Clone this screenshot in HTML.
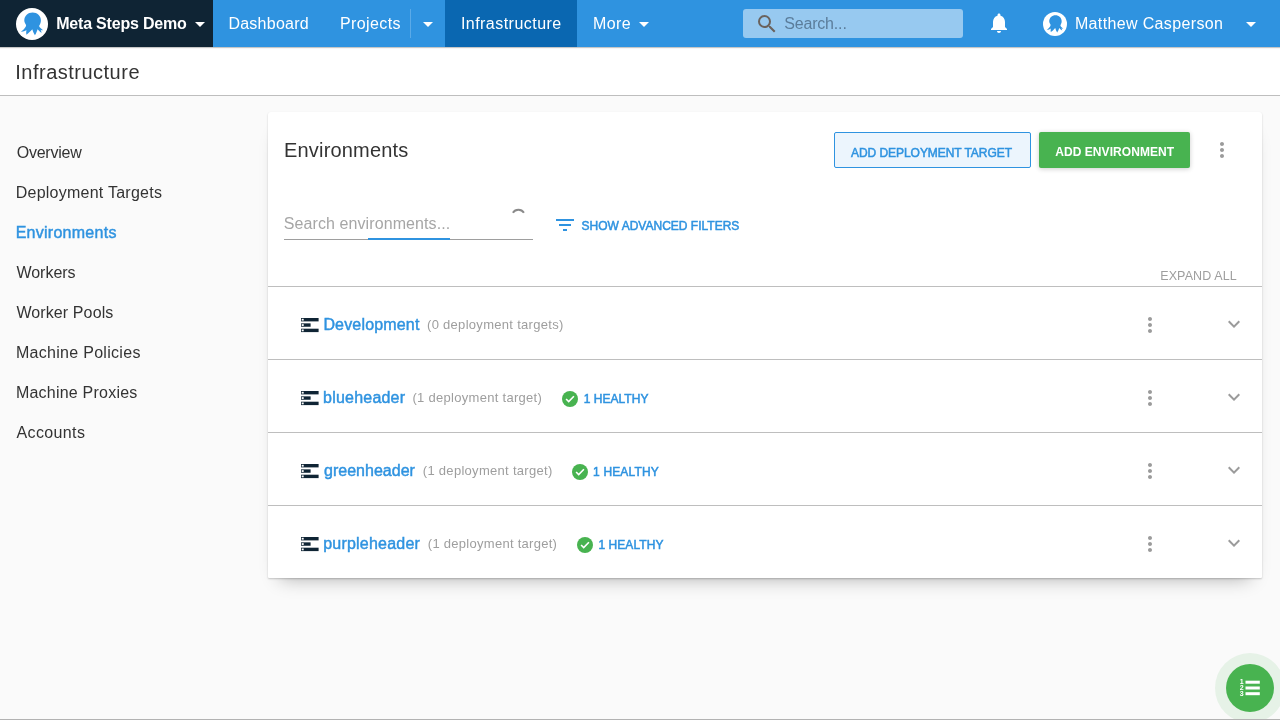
<!DOCTYPE html>
<html lang="en">
<head>
<meta charset="utf-8">
<title>Infrastructure - Environments</title>
<style>
*{box-sizing:border-box;margin:0;padding:0}
html,body{width:1280px;height:720px;overflow:hidden;background:#fafafa;font-family:"Liberation Sans",sans-serif;color:#333}
.abs,.t{position:absolute}
.t{white-space:nowrap;line-height:1}
#nav{position:absolute;left:0;top:0;width:1280px;height:47px;background:#2f93e0;box-shadow:0 1px 1px rgba(0,0,0,.22)}
#space{position:absolute;left:0;top:0;width:213px;height:47px;background:#0f2434}
#active{position:absolute;left:445px;top:0;width:132px;height:47px;background:#0a67b1}
.nt{color:#fff;font-size:16px}
#hdr{position:absolute;left:0;top:47px;width:1280px;height:49px;background:#fff;border-bottom:1px solid #bebebe}
#card{position:absolute;left:268px;top:112px;width:994px;height:466px;background:#fff;border-radius:3px 3px 1px 1px;box-shadow:0 1px 2px rgba(0,0,0,.2),0 12px 18px -12px rgba(0,0,0,.32)}
.hr{position:absolute;left:268px;width:994px;height:1px;background:#bebebe}
.side{font-size:16px;color:#333}
.name{font-size:16px;-webkit-text-stroke-width:.45px;color:#2f93e0}
.cnt{font-size:13px;color:#9e9e9e}
.hl{font-size:12px;-webkit-text-stroke-width:.5px;color:#2f93e0}
svg{position:absolute;overflow:visible}
body{will-change:transform}
/*FIT*/
#t_space{left:56.20px;letter-spacing:-0.200px}
#t_dash{left:228.40px;letter-spacing:0.253px}
#t_proj{left:340.00px;letter-spacing:0.386px}
#t_infra{left:460.90px;letter-spacing:0.465px}
#t_more{left:593.00px;letter-spacing:0.382px}
#t_search{left:784.20px;letter-spacing:-0.173px}
#t_user{left:1074.90px;letter-spacing:0.357px}
#t_title{left:15.25px;letter-spacing:0.496px}
#s1{left:16.70px;letter-spacing:-0.232px}
#s2{left:15.70px;letter-spacing:0.248px}
#s3{left:15.70px;letter-spacing:0.262px}
#s4{left:16.40px;letter-spacing:-0.011px}
#s5{left:16.40px;letter-spacing:0.106px}
#s6{left:15.90px;letter-spacing:0.296px}
#s7{left:15.90px;letter-spacing:0.223px}
#s8{left:16.50px;letter-spacing:0.370px}
#t_env{left:284.00px;letter-spacing:0.180px}
#b1{left:851.00px;letter-spacing:-0.052px}
#b2{left:1055.20px;letter-spacing:0.066px}
#t_ph{left:283.75px;letter-spacing:0.092px}
#t_adv{left:581.60px;letter-spacing:0.008px}
#t_exp{left:1160.20px;letter-spacing:0.118px}
#n1{left:323.40px;letter-spacing:0.167px}
#c1{left:427.00px;letter-spacing:0.298px}
#n2{left:323.10px;letter-spacing:0.206px}
#c2{left:412.50px;letter-spacing:0.288px}
#h2{left:583.75px;letter-spacing:0.024px}
#n3{left:324.00px;letter-spacing:0.019px}
#c3{left:422.80px;letter-spacing:0.293px}
#h3{left:593.10px;letter-spacing:0.149px}
#n4{left:323.25px;letter-spacing:0.207px}
#c4{left:427.80px;letter-spacing:0.278px}
#h4{left:598.40px;letter-spacing:0.067px}
/*ENDFIT*/
</style>
</head>
<body>
<div id="hdr"></div>
<div id="nav"></div>
<div id="space"></div>
<div id="active"></div>

<!-- logo -->
<svg style="left:16px;top:8px" width="32" height="32" viewBox="0 0 32 32"><circle cx="16" cy="16" r="16" fill="#fff"/><path fill="#2f93e0" d="M16.6 4.4C21.3 4.4 24.9 7.9 24.9 12.4C24.9 14.6 24.1 16 23.4 17.3C23 18.1 23.3 18.8 24 19.5L27.1 22.3C26 22.5 25.2 22.2 24.6 21.8L25.7 24.7C24.2 24 22.8 22.8 21.6 21.2C21.1 22.8 20.3 25.2 18.9 27.2C17.8 25.6 17 23.5 16.3 21.3C14.6 23 12.6 25.4 10.4 26.8C10.1 25.2 10.1 23.6 10.4 22C8.8 23.1 6.8 23.8 5 23.6C7 22.4 9 20.4 9.800 18.6C10.2 17.8 10.2 17.2 9.8 16.4C9 15 8.3 14 8.3 12.4C8.3 7.9 12 4.4 16.6 4.4Z"/></svg>
<span class="t nt" id="t_space" style="top:16px;font-weight:bold">Meta Steps Demo</span>
<svg style="left:195px;top:22px" width="10" height="5" viewBox="0 0 10 5"><path d="M0 0h10L5 5z" fill="#fff"/></svg>

<span class="t nt" id="t_dash" style="top:16px">Dashboard</span>
<span class="t nt" id="t_proj" style="top:16px">Projects</span>
<div class="abs" style="left:410px;top:9px;width:1px;height:29px;background:#5aaae8"></div>
<svg style="left:423px;top:22px" width="10" height="5" viewBox="0 0 10 5"><path d="M0 0h10L5 5z" fill="#fff"/></svg>
<span class="t nt" id="t_infra" style="top:16px">Infrastructure</span>
<span class="t nt" id="t_more" style="top:16px">More</span>
<svg style="left:639px;top:22px" width="10" height="5" viewBox="0 0 10 5"><path d="M0 0h10L5 5z" fill="#fff"/></svg>

<!-- search -->
<div class="abs" style="left:743px;top:9px;width:220px;height:29px;border-radius:3px;background:#97c9f0"></div>
<svg style="left:755px;top:12px" width="24" height="24" viewBox="0 0 24 24"><path fill="#6a625d" d="M15.500 14h-.790l-.280-.270A6.471 6.471 0 0 0 16 9.500 6.500 6.500 0 1 0 9.500 16c1.610 0 3.090-.590 4.230-1.570l.270.280v.790l5 4.990L20.490 19l-4.990-5zm-6 0C7.010 14 5 11.990 5 9.500S7.010 5 9.500 5 14 7.010 14 9.500 11.990 14 9.500 14z"/></svg>
<span class="t" id="t_search" style="top:16px;font-size:16px;color:#5b7d9b">Search...</span>

<!-- bell -->
<svg style="left:987px;top:11px" width="24" height="24" viewBox="0 0 24 24"><path fill="#fff" d="M12 22c1.100 0 2-.900 2-2h-4c0 1.100.890 2 2 2zm6-6v-5c0-3.070-1.640-5.640-4.500-6.320V4c0-.830-.670-1.500-1.500-1.500s-1.500.670-1.500 1.500v.680C7.630 5.360 6 7.920 6 11v5l-2 2v1h16v-1l-2-2z"/></svg>

<!-- user -->
<svg style="left:1043px;top:12px" width="24" height="24" viewBox="0 0 32 32"><circle cx="16" cy="16" r="16" fill="#fff"/><path fill="#2f93e0" d="M16.6 4.4C21.3 4.4 24.9 7.9 24.9 12.4C24.9 14.6 24.1 16 23.4 17.3C23 18.1 23.3 18.8 24 19.5L27.1 22.3C26 22.5 25.2 22.2 24.6 21.8L25.7 24.7C24.2 24 22.8 22.8 21.6 21.2C21.1 22.8 20.3 25.2 18.9 27.2C17.8 25.6 17 23.5 16.3 21.3C14.6 23 12.6 25.4 10.4 26.8C10.1 25.2 10.1 23.6 10.4 22C8.8 23.1 6.8 23.8 5 23.6C7 22.4 9 20.4 9.800 18.6C10.2 17.8 10.2 17.2 9.8 16.4C9 15 8.3 14 8.3 12.4C8.3 7.9 12 4.4 16.6 4.4Z"/></svg>
<span class="t nt" id="t_user" style="top:16px">Matthew Casperson</span>
<svg style="left:1246px;top:22px" width="10" height="5" viewBox="0 0 10 5"><path d="M0 0h10L5 5z" fill="#fff"/></svg>

<!-- header -->
<span class="t" id="t_title" style="top:62px;font-size:20px;color:#333">Infrastructure</span>

<!-- sidebar -->
<span class="t side" id="s1" style="top:145px">Overview</span>
<span class="t side" id="s2" style="top:185px">Deployment Targets</span>
<span class="t side" id="s3" style="top:225px;color:#2f93e0;-webkit-text-stroke-width:.45px">Environments</span>
<span class="t side" id="s4" style="top:265px">Workers</span>
<span class="t side" id="s5" style="top:305px">Worker Pools</span>
<span class="t side" id="s6" style="top:345px">Machine Policies</span>
<span class="t side" id="s7" style="top:385px">Machine Proxies</span>
<span class="t side" id="s8" style="top:425px">Accounts</span>

<!-- card -->
<div id="card"></div>
<span class="t" id="t_env" style="top:140px;font-size:20px;color:#333">Environments</span>

<div class="abs" style="left:834px;top:132px;width:197px;height:36px;border:1px solid #2f93e0;border-radius:2px;background:#ecf5fd"></div>
<span class="t" id="b1" style="top:147px;font-size:12px;-webkit-text-stroke-width:.5px;color:#2f93e0">ADD DEPLOYMENT TARGET</span>
<div class="abs" style="left:1039px;top:132px;width:151px;height:36px;border-radius:2px;background:#48b350;box-shadow:0 1px 5px rgba(0,0,0,.2)"></div>
<span class="t" id="b2" style="top:146px;font-size:12px;font-weight:bold;color:#fff">ADD ENVIRONMENT</span>
<svg style="left:1210px;top:138px" width="24" height="24" viewBox="0 0 24 24"><path fill="#9b9b9b" d="M12 8c1.100 0 2-.900 2-2s-.900-2-2-2-2 .900-2 2 .900 2 2 2zm0 2c-1.100 0-2 .900-2 2s.900 2 2 2 2-.900 2-2-.900-2-2-2zm0 6c-1.100 0-2 .900-2 2s.900 2 2 2 2-.900 2-2-.900-2-2-2z"/></svg>

<!-- filter -->
<span class="t" id="t_ph" style="top:216px;font-size:16px;color:#a6a6a6">Search environments...</span>
<div class="abs" style="left:284px;top:239px;width:249px;height:1px;background:#9e9e9e"></div>
<div class="abs" style="left:368px;top:238px;width:82px;height:2px;background:#2f93e0"></div>
<svg style="left:511px;top:207px" width="14" height="14" viewBox="0 0 14 14"><path d="M1.870 5.800A6.600 6.600 0 0 1 12.930 5.800" fill="none" stroke="#8a8a8a" stroke-width="2"/></svg>
<svg style="left:553px;top:213px" width="24" height="24" viewBox="0 0 24 24"><path fill="#2f93e0" d="M10 18h4v-2h-4v2zM3 6v2h18V6H3zm3 7h12v-2H6v2z"/></svg>
<span class="t" id="t_adv" style="top:220px;font-size:12px;-webkit-text-stroke-width:.5px;color:#2f93e0">SHOW ADVANCED FILTERS</span>
<span class="t" id="t_exp" style="top:270px;font-size:12.5px;color:#9e9e9e">EXPAND ALL</span>

<div class="hr" style="top:286px"></div>
<div class="hr" style="top:359px"></div>
<div class="hr" style="top:432px"></div>
<div class="hr" style="top:505px"></div>

<!-- rows -->
<svg width="0" height="0" style="left:0;top:0"><defs>
<g id="srv"><rect x="0" y="0" width="17.600" height="3.400" fill="#0f2434"/><rect x="0" y="5.350" width="9.600" height="3.400" fill="#0f2434"/><rect x="0" y="10.700" width="17.600" height="3.400" fill="#0f2434"/><rect x=".700" y=".800" width="2" height="1.800" fill="#fff"/><rect x=".700" y="6.150" width="2" height="1.800" fill="#fff"/><rect x=".700" y="11.500" width="2" height="1.800" fill="#fff"/></g>
<g id="keb"><path fill="#9b9b9b" d="M12 8c1.100 0 2-.900 2-2s-.900-2-2-2-2 .900-2 2 .900 2 2 2zm0 2c-1.100 0-2 .900-2 2s.900 2 2 2 2-.900 2-2-.900-2-2-2zm0 6c-1.100 0-2 .900-2 2s.900 2 2 2 2-.900 2-2-.900-2-2-2z"/></g>
<g id="chev"><path fill="#9b9b9b" d="M16.590 8.590L12 13.170 7.410 8.590 6 10l6 6 6-6z"/></g>
<g id="ok"><circle cx="8" cy="8" r="8" fill="#48b350"/><path d="M4.100 8l2.600 2.600 5.200-5.300" fill="none" stroke="#fff" stroke-width="1.600"/></g>
</defs></svg>

<!-- row 1 -->
<svg style="left:301.200px;top:317.900px" width="18" height="15"><use href="#srv"/></svg>
<span class="t name" id="n1" style="top:317px">Development</span>
<span class="t cnt" id="c1" style="top:318px">(0 deployment targets)</span>
<svg style="left:1138px;top:313px" width="24" height="24" viewBox="0 0 24 24"><use href="#keb"/></svg>
<svg style="left:1222px;top:312px" width="24" height="24" viewBox="0 0 24 24"><use href="#chev"/></svg>

<!-- row 2 -->
<svg style="left:301.200px;top:390.900px" width="18" height="15"><use href="#srv"/></svg>
<span class="t name" id="n2" style="top:390px">blueheader</span>
<span class="t cnt" id="c2" style="top:391px">(1 deployment target)</span>
<svg style="left:562px;top:391px" width="16" height="16" viewBox="0 0 16 16"><use href="#ok"/></svg>
<span class="t hl" id="h2" style="top:393px">1 HEALTHY</span>
<svg style="left:1138px;top:386px" width="24" height="24" viewBox="0 0 24 24"><use href="#keb"/></svg>
<svg style="left:1222px;top:385px" width="24" height="24" viewBox="0 0 24 24"><use href="#chev"/></svg>

<!-- row 3 -->
<svg style="left:301.200px;top:463.900px" width="18" height="15"><use href="#srv"/></svg>
<span class="t name" id="n3" style="top:463px">greenheader</span>
<span class="t cnt" id="c3" style="top:464px">(1 deployment target)</span>
<svg style="left:572px;top:464px" width="16" height="16" viewBox="0 0 16 16"><use href="#ok"/></svg>
<span class="t hl" id="h3" style="top:466px">1 HEALTHY</span>
<svg style="left:1138px;top:459px" width="24" height="24" viewBox="0 0 24 24"><use href="#keb"/></svg>
<svg style="left:1222px;top:458px" width="24" height="24" viewBox="0 0 24 24"><use href="#chev"/></svg>

<!-- row 4 -->
<svg style="left:301.200px;top:536.900px" width="18" height="15"><use href="#srv"/></svg>
<span class="t name" id="n4" style="top:536px">purpleheader</span>
<span class="t cnt" id="c4" style="top:537px">(1 deployment target)</span>
<svg style="left:577px;top:537px" width="16" height="16" viewBox="0 0 16 16"><use href="#ok"/></svg>
<span class="t hl" id="h4" style="top:539px">1 HEALTHY</span>
<svg style="left:1138px;top:532px" width="24" height="24" viewBox="0 0 24 24"><use href="#keb"/></svg>
<svg style="left:1222px;top:531px" width="24" height="24" viewBox="0 0 24 24"><use href="#chev"/></svg>

<!-- fab -->
<div class="abs" style="left:1215px;top:653px;width:70px;height:70px;border-radius:50%;background:#e6f2e7"></div>
<div class="abs" style="left:1226px;top:664px;width:48px;height:48px;border-radius:50%;background:#48b350"></div>
<svg style="left:1240px;top:678px" width="20" height="20" viewBox="0 0 20 20"><rect x="5.500" y="2.700" width="14.300" height="3" fill="#fff"/><rect x="5.500" y="8.500" width="14.300" height="3" fill="#fff"/><rect x="5.500" y="14.200" width="14.300" height="3" fill="#fff"/><text x="-.300" y="6.300" font-family="Liberation Sans, sans-serif" font-weight="bold" font-size="7" fill="#fff">1</text><text x="-.300" y="12.300" font-family="Liberation Sans, sans-serif" font-weight="bold" font-size="7" fill="#fff">2</text><text x="-.300" y="18.300" font-family="Liberation Sans, sans-serif" font-weight="bold" font-size="7" fill="#fff">3</text></svg>

<div class="abs" style="left:0;top:719px;width:1280px;height:1px;background:#b2b2b2"></div>
</body>
</html>
